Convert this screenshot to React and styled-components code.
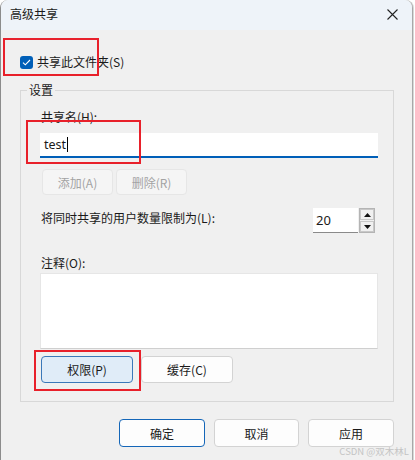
import React from 'react';
import styled, { createGlobalStyle, css } from 'styled-components';

const Global = createGlobalStyle`
	html, body {
		margin: 0;
		background: #ffffff;
	}
	body {
		font-family: 'Noto Sans CJK SC', 'Noto Sans', sans-serif;
		font-size: 12px;
		color: #1a1a1a;
	}
`;

const Window = styled.div`
	position: relative;
	width: 411px;
	height: 460px;
	background: #f0f0f0;
	border-left: 1px solid #8c8c8c;
	border-right: 1px solid #a8a8a8;
	box-shadow: 1px 0 0 #d8d8d8;
	border-radius: 8px 8px 0 0;
	overflow: hidden;
	display: flex;
	flex-direction: column;
`;

const TitleBar = styled.div`
	height: 28px;
	background: #eef3f9;
	display: flex;
	align-items: center;
	justify-content: space-between;
	padding: 0 10px 2px 9px;
	font-size: 12px;
	line-height: 16px;
`;

const CloseBtn = styled.svg`
	width: 11px;
	height: 11px;
	margin-right: 4px;
`;

const Body = styled.div`
	display: flex;
	flex-direction: column;
	padding: 0 18px 0 19px;
`;

const CheckRow = styled.label`
	display: flex;
	align-items: center;
	gap: 4px;
	height: 16px;
	margin-top: 24px;
	line-height: 16px;
`;

const CheckBox = styled.span`
	width: 13px;
	height: 13px;
	border-radius: 3px;
	background: #005fb8;
	display: flex;
	align-items: center;
	justify-content: center;
`;

const Group = styled.fieldset`
	margin: 12px 0 0 0;
	padding: 11px 15px 18px 19px;
	border: 1px solid #d8d8d8;
	min-width: 0;
	display: flex;
	flex-direction: column;
`;

const Legend = styled.legend`
	padding: 0 2px;
	margin-left: -13px;
	line-height: 16px;
	font-size: 12px;
`;

const Label = styled.div`
	line-height: 16px;
	padding-left: 1px;
	margin-top: ${p => p.$top || 0}px;
`;

const TextField = styled.div`
	margin-top: 8px;
	height: 23px;
	background: #ffffff;
	border-bottom: 2px solid #005fb8;
	display: flex;
	align-items: center;
	padding-left: 4px;
	font-family: 'Noto Sans', sans-serif;
	font-size: 12.5px;
`;

const Caret = styled.span`
	display: inline-block;
	width: 1px;
	height: 15px;
	background: #000;
	margin-left: 1px;
`;

const ButtonRow = styled.div`
	display: flex;
	gap: ${p => p.$gap || 3}px;
	margin-top: ${p => p.$top || 0}px;
	justify-content: ${p => p.$end ? 'flex-end' : 'flex-start'};
`;

const Button = styled.button`
	box-sizing: border-box;
	font-family: 'Noto Sans CJK SC', 'Noto Sans', sans-serif;
	font-size: 12px;
	height: ${p => p.$h || 27}px;
	width: ${p => p.$w}px;
	border-radius: 4px;
	border: 1px solid #d3d3d3;
	background: #fdfdfd;
	color: #1a1a1a;
	padding: 0;
	margin-left: ${p => p.$ml || 0}px;
	${p => p.$disabled && css`
		background: #f5f5f5;
		border-color: #e6e6e6;
		color: #a3a3a3;
	`}
	${p => p.$primary && css`
		border-color: #1466b8;
	`}
	${p => p.$focused && css`
		background: #e0ecf8;
		border-color: #3b78b9;
	`}
`;

const LimitRow = styled.div`
	display: flex;
	justify-content: space-between;
	align-items: flex-start;
	margin-top: 13px;
`;

const Spin = styled.div`
	display: flex;
	margin-right: 3px;
	gap: 1px;
`;

const SpinInput = styled.div`
	width: 42px;
	height: 24px;
	background: #ffffff;
	border-bottom: 1px solid #8a8a8a;
	font-family: 'Noto Sans', sans-serif;
	font-size: 13px;
	line-height: 24px;
	padding-left: 3px;
`;

const SpinArrows = styled.div`
	width: 14px;
	height: 23px;
	border: 1px solid #b4b4b4;
	display: flex;
	flex-direction: column;
	gap: 1px;
`;

const Arrow = styled.div`
	flex: 1;
	background: #f0f0f0;
	border: 1px solid #c8c8c8;
	display: flex;
	align-items: center;
	justify-content: center;
`;

const Memo = styled.div`
	margin-top: 2px;
	height: 74px;
	background: #ffffff;
	border: 1px solid #e6e6e6;
	border-bottom-color: #cfcfcf;
`;

const Mark = styled.div`
	position: absolute;
	border: 2px solid #e8202a;
	left: ${p => p.$x}px;
	top: ${p => p.$y}px;
	width: ${p => p.$w}px;
	height: ${p => p.$h}px;
	box-sizing: border-box;
	pointer-events: none;
`;

const Watermark = styled.div`
	position: absolute;
	right: 3px;
	bottom: 3px;
	font-family: 'Noto Sans CJK SC', sans-serif;
	font-size: 9.5px;
	line-height: 12px;
	color: #c4c4c4;
`;

const Tri = ({ up }) => (
	<svg width="7" height="4" viewBox="0 0 7 4">
		<path d={up ? 'M0 4 L3.5 0 L7 4 Z' : 'M0 0 L3.5 4 L7 0 Z'} fill="#111" />
	</svg>
);

const App = () => {
	return (
		<>
			<Global />
			<Window>
				<TitleBar>
					<span>高级共享</span>
					<CloseBtn viewBox="0 0 11 11">
						<path d="M0.5 0.5 L10.5 10.5 M10.5 0.5 L0.5 10.5" stroke="#222" strokeWidth="1.1" />
					</CloseBtn>
				</TitleBar>
				<Body>
					<CheckRow>
						<CheckBox>
							<svg width="9" height="7" viewBox="0 0 9 7">
								<path d="M1 3.6 L3.3 5.8 L8 1" stroke="#fff" strokeWidth="1.1" fill="none" />
							</svg>
						</CheckBox>
						<span>共享此文件夹(S)</span>
					</CheckRow>
					<Group>
						<Legend>设置</Legend>
						<Label>共享名(H):</Label>
						<TextField>test<Caret /></TextField>
						<ButtonRow $top={11} $gap={3}>
							<Button $disabled $w={71} $h={26} $ml={2}>添加(A)</Button>
							<Button $disabled $w={71} $h={26}>删除(R)</Button>
						</ButtonRow>
						<LimitRow>
							<Label $top={2}>将同时共享的用户数量限制为(L):</Label>
							<Spin>
								<SpinInput>20</SpinInput>
								<SpinArrows>
									<Arrow><Tri up /></Arrow>
									<Arrow><Tri /></Arrow>
								</SpinArrows>
							</Spin>
						</LimitRow>
						<Label $top={22}>注释(O):</Label>
						<Memo />
						<ButtonRow $top={7} $gap={8}>
							<Button $focused $w={92} $ml={1}>权限(P)</Button>
							<Button $w={92}>缓存(C)</Button>
						</ButtonRow>
					</Group>
					<ButtonRow $top={17} $gap={9} $end>
						<Button $primary $w={86} $h={28}>确定</Button>
						<Button $w={85} $h={28}>取消</Button>
						<Button $w={86} $h={28}>应用</Button>
					</ButtonRow>
				</Body>
				<Mark $x={2} $y={38} $w={96} $h={38} />
				<Mark $x={25} $y={120} $w={115} $h={44} />
				<Mark $x={33} $y={350} $w={107} $h={41} />
				<Watermark>CSDN @双木林L</Watermark>
			</Window>
		</>
	);
};

export default App;
